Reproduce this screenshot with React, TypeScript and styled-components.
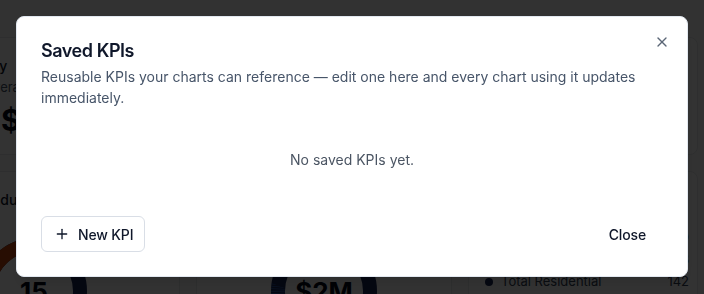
import React from "react";
import styled, { createGlobalStyle } from "styled-components";
import { Plus, X } from "lucide-react";

const Global = createGlobalStyle`
  * { box-sizing: border-box; }
  html, body { margin: 0; padding: 0; background: #fafafa; }
  body { font-family: Inter, "Noto Sans", sans-serif; color: #0f172a; overflow: hidden; width: 704px; height: 294px; }
`;

/* ---------- background dashboard (dimmed behind the dialog) ---------- */
const Dashboard = styled.div`
  display: grid;
  grid-template-columns: 266px 256px 230px;
  grid-template-rows: 118px 200px;
  gap: 16px;
  padding-top: 37px;
  margin-left: -86px;
  width: 830px;
`;

const Card = styled.div`
  background: #ffffff;
  border: 1px solid #e5e7eb;
  border-radius: 8px;
  padding: 18px 16px;
  display: flex;
  flex-direction: column;
  gap: 2px;
  overflow: hidden;
`;

const CardLabel = styled.div<{ $indent?: number }>`
  font-size: 14px;
  font-weight: 500;
  line-height: 20px;
  color: #0f172a;
  white-space: nowrap;
  padding-left: ${(p) => p.$indent ?? 0}px;
`;

const CardSub = styled.div<{ $indent?: number }>`
  font-size: 13px;
  line-height: 18px;
  color: #475569;
  white-space: nowrap;
  padding-left: ${(p) => p.$indent ?? 0}px;
`;

const CardValue = styled.div<{ $indent?: number }>`
  font-size: 30px;
  font-weight: 700;
  line-height: 36px;
  color: #020617;
  margin-top: 4px;
  white-space: nowrap;
  padding-left: ${(p) => p.$indent ?? 0}px;
`;

const DonutWrap = styled.div<{ $indent?: number; $center?: boolean }>`
  position: relative;
  width: 110px;
  height: 110px;
  margin-top: 24px;
  margin-left: ${(p) => (p.$center ? "auto" : `${p.$indent ?? 0}px`)};
  margin-right: ${(p) => (p.$center ? "auto" : "0")};
`;

const DonutNum = styled.div`
  position: absolute;
  inset: 0;
  display: flex;
  align-items: center;
  justify-content: center;
  font-size: 26px;
  font-weight: 700;
  color: #020617;
`;

const Legend = styled.div`
  display: flex;
  flex-direction: column;
  margin-top: 14px;
  margin-right: -8px;
`;

const LegendRow = styled.div`
  display: flex;
  justify-content: space-between;
  align-items: center;
  font-size: 13px;
  line-height: 22px;
  color: #334155;
`;

const Dot = styled.span<{ $c: string }>`
  display: inline-block;
  width: 8px;
  height: 8px;
  border-radius: 50%;
  background: ${(p) => p.$c};
  margin-right: 8px;
`;

const Donut = ({ orange }: { orange?: boolean }) => (
  <svg width="110" height="110" viewBox="0 0 110 110">
    <circle cx="55" cy="55" r="46" fill="none" stroke="#172554" strokeWidth="14" />
    <circle
      cx="55"
      cy="55"
      r="46"
      fill="none"
      stroke="#3b82f6"
      strokeWidth="14"
      pathLength={400}
      strokeDasharray="1 2"
      strokeOpacity="0.6"
      transform="rotate(20 55 55)"
      style={{ clipPath: "inset(60% 0 0 0)" }}
    />
    {orange && (
      <circle
        cx="55"
        cy="55"
        r="46"
        fill="none"
        stroke="#c2410c"
        strokeWidth="14"
        pathLength={100}
        strokeDasharray="16 84"
        transform="rotate(200 55 55)"
      />
    )}
  </svg>
);

/* ---------- overlay + dialog ---------- */
const Overlay = styled.div`
  position: fixed;
  inset: 0;
  background: rgba(0, 0, 0, 0.8);
`;

const Dialog = styled.div`
  position: fixed;
  left: 16px;
  top: 16px;
  width: 672px;
  background: #ffffff;
  border: 1px solid #e2e8f0;
  border-radius: 8px;
  padding: 24px;
  display: flex;
  flex-direction: column;
  box-shadow: 0 10px 15px -3px rgba(0, 0, 0, 0.1), 0 4px 6px -4px rgba(0, 0, 0, 0.1);
`;

const Header = styled.div`
  display: flex;
  flex-direction: column;
  gap: 5px;
`;

const Title = styled.h2`
  margin: 0;
  font-size: 18px;
  font-weight: 600;
  line-height: 20px;
  letter-spacing: -0.025em;
  color: #0f172a;
`;

const Description = styled.p`
  margin: 0;
  font-size: 14px;
  line-height: 21px;
  color: #475569;
`;

const Empty = styled.div`
  margin-top: 16px;
  padding: 26px 0 30px;
  text-align: center;
  font-size: 14px;
  line-height: 20px;
  color: #4b5563;
`;

const Footer = styled.div`
  margin-top: 16px;
  display: flex;
  justify-content: space-between;
  align-items: center;
`;

const Button = styled.button<{ $variant: "outline" | "ghost" }>`
  display: inline-flex;
  align-items: center;
  gap: 8px;
  height: 36px;
  padding: ${(p) => (p.$variant === "outline" ? "0 11px 0 12px" : "0 16px")};
  border-radius: 6px;
  font-family: inherit;
  font-size: 14px;
  font-weight: 500;
  letter-spacing: -0.01em;
  color: #0f172a;
  background: #ffffff;
  border: 1px solid ${(p) => (p.$variant === "outline" ? "#d9dee6" : "transparent")};
  cursor: pointer;
`;

const CloseIcon = styled.button`
  position: absolute;
  right: 17px;
  top: 17px;
  width: 16px;
  height: 16px;
  padding: 0;
  border: none;
  background: transparent;
  color: #334155;
  opacity: 0.8;
  display: flex;
  cursor: pointer;
`;

export default function App() {
  return (
    <>
      <Global />
      <Dashboard>
        <Card>
          <CardLabel>Occupancy</CardLabel>
          <CardSub $indent={54}>Average across sites</CardSub>
          <CardValue $indent={70}>$2.4M</CardValue>
        </Card>
        <Card>
          <CardLabel>Revenue</CardLabel>
          <CardSub>Year to date</CardSub>
          <CardValue>$1.1M</CardValue>
        </Card>
        <Card>
          <CardLabel>Leases</CardLabel>
          <CardSub>Active</CardSub>
          <CardValue>320</CardValue>
        </Card>
        <Card>
          <CardLabel $indent={57}>Industry mix</CardLabel>
          <DonutWrap $indent={48}>
            <Donut orange />
            <DonutNum>15</DonutNum>
          </DonutWrap>
        </Card>
        <Card>
          <CardLabel>Portfolio value</CardLabel>
          <DonutWrap $center>
            <Donut />
            <DonutNum>$2M</DonutNum>
          </DonutWrap>
        </Card>
        <Card>
          <CardLabel>Units by type</CardLabel>
          <Legend>
            <LegendRow>
              <span><Dot $c="#1e3a8a" />Commercial</span>
              <span>20</span>
            </LegendRow>
            <LegendRow>
              <span><Dot $c="#3b82f6" />Mixed use</span>
              <span>38</span>
            </LegendRow>
            <LegendRow>
              <span><Dot $c="#172554" />Total Residential</span>
              <span>142</span>
            </LegendRow>
          </Legend>
        </Card>
      </Dashboard>
      <Overlay />
      <Dialog role="dialog">
        <Header>
          <Title>Saved KPIs</Title>
          <Description>
            Reusable KPIs your charts can reference — edit one here and every chart using it updates
            immediately.
          </Description>
        </Header>
        <Empty>No saved KPIs yet.</Empty>
        <Footer>
          <Button $variant="outline">
            <Plus size={16} strokeWidth={2} />
            New KPI
          </Button>
          <Button $variant="ghost">Close</Button>
        </Footer>
        <CloseIcon aria-label="Close">
          <X size={16} strokeWidth={2} />
        </CloseIcon>
      </Dialog>
    </>
  );
}
